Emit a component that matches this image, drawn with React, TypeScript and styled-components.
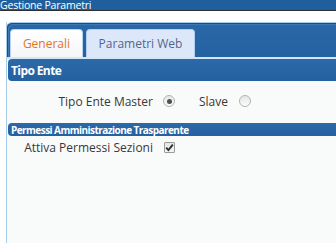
import React from 'react'
import styled, { createGlobalStyle } from 'styled-components'

const GlobalStyle = createGlobalStyle`
  html, body {
    margin: 0;
    padding: 0;
    background: #ffffff;
    font-family: 'Open Sans', 'Liberation Sans', sans-serif;
  }
  #root {
    height: 100vh;
  }
`

const App: React.FC = () => {
  return (
    <Page>
      <GlobalStyle />
      <TitleBar>
        <TitleText>Gestione Parametri</TitleText>
      </TitleBar>

      <Content>
        <Panel>
          <TabStrip>
            <Tab active>Generali</Tab>
            <Tab>Parametri Web</Tab>
          </TabStrip>

          <Body>
            <SectionHeader>Tipo Ente</SectionHeader>
            <FieldRow>
              <Label>Tipo Ente Master</Label>
              <Controls>
                <Radio checked />
                <OptionLabel>Slave</OptionLabel>
                <Radio />
              </Controls>
            </FieldRow>

            <SectionHeader small>Permessi Amministrazione Trasparente</SectionHeader>
            <FieldRow small>
              <Label>Attiva Permessi Sezioni</Label>
              <Controls>
                <Checkbox>
                  <svg width="9" height="9" viewBox="0 0 9 9">
                    <path d="M1.2 4.6 L3.4 7 L7.8 1.6" fill="none" stroke="#2b2b2b" strokeWidth="1.8" />
                  </svg>
                </Checkbox>
              </Controls>
            </FieldRow>
          </Body>
        </Panel>
      </Content>
    </Page>
  )
}

const Page = styled.div`
  display: flex;
  flex-direction: column;
  height: 100%;
`

const TitleBar = styled.div`
  height: 10px;
  background: #1f5f9e;
  border-bottom: 1px solid #2c2f33;
  flex-shrink: 0;
`

const TitleText = styled.span`
  display: block;
  color: #ffffff;
  font-size: 10.5px;
  line-height: 10px;
  letter-spacing: -0.2px;
  white-space: nowrap;
`

const Content = styled.div`
  flex: 1;
  padding: 11px 0 0 6px;
  display: flex;
`

const Panel = styled.div`
  flex: 1;
  display: flex;
  flex-direction: column;
  border-left: 1px solid #a6cde9;
  background: #f9fbfb;
`

const TabStrip = styled.div`
  height: 34px;
  display: flex;
  align-items: flex-end;
  gap: 3px;
  padding-left: 3px;
  background: linear-gradient(#2a67a6, #2562a2);
  border-top: 1px solid #a6cde9;
  border-top-left-radius: 5px;
  box-shadow: inset 1px 1px 0 #1b4c80, inset 2px 2px 0 #3d78b5;
  border-bottom: 2px solid #d4e6f5;
`

const Tab = styled.div<{ active?: boolean }>`
  height: 28px;
  box-sizing: border-box;
  display: flex;
  align-items: center;
  justify-content: center;
  width: ${p => (p.active ? '73px' : '109px')};
  font-size: 12px;
  white-space: nowrap;
  border: 1px solid ${p => (p.active ? '#b8d3ea' : '#b5cdee')};
  border-bottom: none;
  border-radius: 4px 4px 0 0;
  color: ${p => (p.active ? '#e5731b' : '#56648a')};
  background: ${p => (p.active ? 'linear-gradient(#ffffff, #f3f6f8)' : '#dce8f9')};
`

const Body = styled.div`
  display: flex;
  flex-direction: column;
`

const SectionHeader = styled.div<{ small?: boolean }>`
  height: ${p => (p.small ? '13px' : '22px')};
  margin-left: 1px;
  padding-left: 3px;
  display: flex;
  align-items: center;
  color: #ffffff;
  font-weight: 700;
  font-size: ${p => (p.small ? '10px' : '12px')};
  letter-spacing: ${p => (p.small ? '-0.55px' : '-0.6px')};
  background: linear-gradient(#2b69a9, #2461a1);
  border-radius: 4px 0 0 4px;
  white-space: nowrap;
`

const FieldRow = styled.div<{ small?: boolean }>`
  display: grid;
  grid-template-columns: 146px auto;
  align-items: center;
  height: 20px;
  margin: ${p => (p.small ? '1px 0 0' : '10px 0 12px')};
`

const Label = styled.span`
  text-align: right;
  font-size: 12px;
  color: #383838;
  white-space: nowrap;
`

const Controls = styled.div`
  display: flex;
  align-items: center;
  padding-left: 10px;
`

const OptionLabel = styled.span`
  font-size: 12px;
  color: #383838;
  margin: 0 11px 0 24px;
`

const Radio = styled.span<{ checked?: boolean }>`
  width: 12px;
  height: 12px;
  box-sizing: border-box;
  border-radius: 50%;
  border: 1px solid #b2b2b2;
  background: linear-gradient(#e6e6e6, #fbfbfb);
  display: flex;
  align-items: center;
  justify-content: center;

  &::after {
    content: '';
    display: ${p => (p.checked ? 'block' : 'none')};
    width: 5px;
    height: 5px;
    border-radius: 50%;
    background: #4f4f4f;
  }
`

const Checkbox = styled.span`
  width: 11px;
  height: 11px;
  box-sizing: border-box;
  border: 1px solid #9a9a9a;
  border-radius: 1px;
  background: linear-gradient(#e4e4e4, #f4f4f4);
  display: flex;
  align-items: center;
  justify-content: center;
  margin-left: 1px;
`

export default App
